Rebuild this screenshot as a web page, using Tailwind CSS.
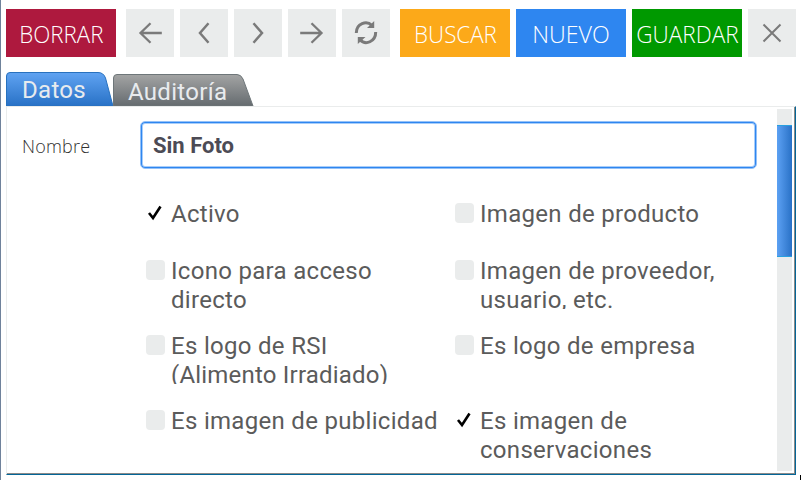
<!DOCTYPE html>
<html lang="es">
<head>
<meta charset="utf-8">
<title>Imágenes</title>
<script src="https://cdn.jsdelivr.net/npm/@tailwindcss/browser@4"></script>
</head>
<body class="bg-white">
<main class="relative w-[801px] h-[480px] overflow-hidden border-l border-[#6f829b] pl-[5px] pt-[9px] font-['Roboto',sans-serif] text-[#5b5b5b]">
  <div class="flex h-12 text-white whitespace-nowrap font-['Open_Sans',sans-serif] font-light text-[24px]">
    <button class="w-[110px] h-12 bg-[#ae193e] flex items-center justify-center pt-px"><span class="scale-x-[0.93]">BORRAR</span></button>
    <div class="flex gap-1.5 ml-2.5">
      <button class="size-12 bg-[#eaecec]"><svg class="size-12" viewBox="0 0 48 48" fill="none" stroke="#7a7a7a" stroke-width="2.3"><path d="M35.8 24H14.5M24.5 14.2L14.5 24L24.5 33.8"/></svg></button>
      <button class="size-12 bg-[#eaecec]"><svg class="size-12" viewBox="0 0 48 48" fill="none" stroke="#7a7a7a" stroke-width="2.5"><path d="M28.5 14.2L20 24L28.5 33.8"/></svg></button>
      <button class="size-12 bg-[#eaecec]"><svg class="size-12" viewBox="0 0 48 48" fill="none" stroke="#7a7a7a" stroke-width="2.5"><path d="M19.5 14.2L28 24L19.5 33.8"/></svg></button>
      <button class="size-12 bg-[#eaecec]"><svg class="size-12" viewBox="0 0 48 48" fill="none" stroke="#7a7a7a" stroke-width="2.3"><path d="M12.2 24H33.5M23.5 14.2L33.5 24L23.5 33.8"/></svg></button>
      <button class="size-12 bg-[#eaecec]"><svg class="size-12" viewBox="0 0 48 48" fill="none" stroke="#7a7a7a" stroke-width="3"><path d="M14.3 24C14.3 14.5 24.5 11 30 16.5M33.7 23C33.7 32.5 23.5 37 18 30.5"/><path fill="#7a7a7a" stroke="none" d="M32.2 12V19H25ZM15.8 35V28H23.5Z"/></svg></button>
    </div>
    <div class="flex gap-1.5 ml-2.5">
      <button class="w-[110px] h-12 bg-[#fca919] flex items-center justify-center pt-px"><span class="scale-x-[0.93]">BUSCAR</span></button>
      <button class="w-[110px] h-12 bg-[#2e86f0] flex items-center justify-center pt-px"><span class="scale-x-[0.97]">NUEVO</span></button>
      <button class="w-[110px] h-12 bg-[#009900] flex items-center justify-center pt-px"><span class="scale-x-[0.94]">GUARDAR</span></button>
      <button class="size-12 bg-[#eaecec]"><svg class="size-12" viewBox="0 0 48 48" fill="none" stroke="#7a7a7a" stroke-width="2"><path d="M15.5 15.5L32.5 32.5M32.5 15.5L15.5 32.5"/></svg></button>
    </div>
  </div>

  <nav class="flex items-end h-[34px] mt-[15px] text-[24px] leading-[29px] tracking-[0.3px] text-[#e8ebee]">
    <div class="relative w-[107px] h-[34px]">
      <svg class="absolute inset-0" width="107" height="34"><defs><linearGradient id="blue" x2="0" y2="1"><stop stop-color="#60a3f2"/><stop offset="1" stop-color="#2871c6"/></linearGradient></defs><path d="M.5 34V4Q.5 .5 4 .5H92Q97.5 .5 99.5 6L107 34Z" fill="url(#blue)" stroke="#2871be"/></svg>
      <span class="relative block pl-4 pt-1">Datos</span>
    </div>
    <div class="relative w-[141px] h-8">
      <svg class="absolute inset-0" width="141" height="32"><defs><linearGradient id="gray" x2="0" y2="1"><stop stop-color="#a3a4a4"/><stop offset="1" stop-color="#656b6f"/></linearGradient></defs><path d="M.5 32V4Q.5 .5 4 .5H124Q128 .5 130 5L140 32Z" fill="url(#gray)" stroke="#6e7679"/></svg>
      <span class="relative block pl-[15px] pt-1">Auditoría</span>
    </div>
  </nav>

  <section class="flex w-[790px] h-[369px] border-t border-l border-t-[#eaecec] border-l-[#eaecec] border-r border-b border-r-[#046698] border-b-[#046698] shadow-[inset_-1px_-1px_0_#8a8a8a]">
    <div class="w-[133px] pl-[15px] pt-[25px] font-['Open_Sans',sans-serif] font-light text-[18px] leading-7"><span class="text-[#303030] tracking-[0.2px]">Nombre</span></div>
    <div class="w-[617px] pt-[14px]">
      <div class="w-[617px] h-12 border border-[#94c1f8] shadow-[inset_0_0_0_1px_#2e86f0,inset_0_0_0_2px_#a8cdf9] rounded-[5px] pl-3 flex items-center text-[22px] font-bold text-[#4c4b55]"><span>Sin Foto</span></div>
      <div class="grid grid-cols-[309px_300px] grid-rows-[57px_75px_75px_65px] mt-[30px] pl-1.5 text-[24px] leading-[29px] tracking-[0.3px]">
        <label class="flex"><svg class="w-5 h-5 mt-1 mr-[5px]" viewBox="0 0 20 20" fill="none" stroke="#000" stroke-width="2.6"><path d="M3 10L7 15L14.500 3.500"/></svg><span class="pt-px">Activo</span></label>
        <label class="flex"><i class="w-[19px] h-5 mt-1 mr-1.5 rounded-sm bg-[#eaecec]"></i><span class="pt-px">Imagen de producto</span></label>
        <label class="flex h-[53px] overflow-hidden"><i class="w-[19px] h-5 mt-1 mr-1.5 rounded-sm bg-[#eaecec]"></i><span class="pt-px">Icono para acceso<br>directo</span></label>
        <label class="flex h-[53px] overflow-hidden"><i class="w-[19px] h-5 mt-1 mr-1.5 rounded-sm bg-[#eaecec]"></i><span class="pt-px">Imagen de proveedor,<br>usuario, etc.</span></label>
        <label class="flex h-[53px] overflow-hidden"><i class="w-[19px] h-5 mt-1 mr-1.5 rounded-sm bg-[#eaecec]"></i><span class="pt-px">Es logo de RSI<br><span class="tracking-[0.2px]">(Alimento Irradiado)</span></span></label>
        <label class="flex"><i class="w-[19px] h-5 mt-1 mr-1.5 rounded-sm bg-[#eaecec]"></i><span class="pt-px">Es logo de empresa</span></label>
        <label class="flex whitespace-nowrap"><i class="w-[19px] h-5 mt-1 mr-1.5 rounded-sm bg-[#eaecec]"></i><span class="pt-px">Es imagen de publicidad</span></label>
        <label class="flex"><svg class="w-5 h-5 mt-1 mr-[5px]" viewBox="0 0 20 20" fill="none" stroke="#000" stroke-width="2.6"><path d="M3 10L7 15L14.500 3.500"/></svg><span class="pt-px">Es imagen de<br>conservaciones</span></label>
      </div>
    </div>
    <div class="w-[15px] h-[362px] mt-0.5 ml-[20px] pt-4 bg-[#eaecec]">
      <div class="h-[132px] border-y border-[#28a0e0] bg-linear-to-r from-[#5ca1f3] to-[#2871c6]"></div>
    </div>
  </section>
  <div class="absolute left-[799px] top-[475px] w-px h-[5px] bg-black"></div>
</main>
</body>
</html>
